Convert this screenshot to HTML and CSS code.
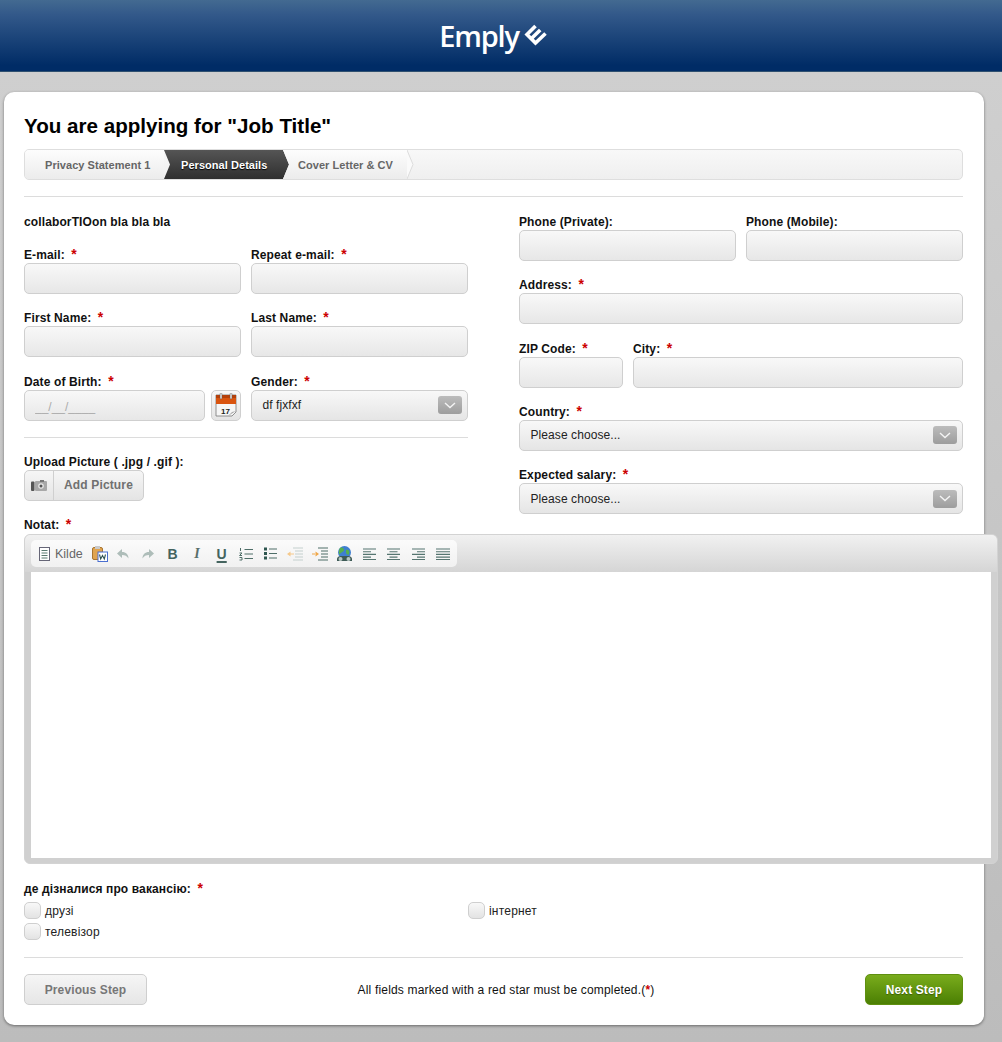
FILE: index.html
```html
<!DOCTYPE html>
<html lang="en">
<head>
<meta charset="utf-8">
<title>Emply</title>
<link rel="stylesheet" href="styles.css">
</head>
<body>
<header class="top">
  <span class="logo-text">Emply</span>
  <svg class="logo-mark" width="24" height="23" viewBox="0 0 24 23"><path d="M11.5 3 L3 11.5 L11.5 20 L21.5 10.5 M7.2 15.8 L16.2 7" fill="none" stroke="#fff" stroke-width="3.6" stroke-linejoin="miter"/></svg>
</header>
<main class="card">
  <h1 class="title">You are applying for "Job Title"</h1>
  <nav class="steps">
    <div class="step step-first">Privacy Statement 1</div>
    <div class="step step-active">Personal Details</div>
    <div class="step step-last">Cover Letter &amp; CV</div>
    <svg class="step-tip" width="7" height="29" viewBox="0 0 7 29"><path d="M0 0 L6 14.5 L0 29" fill="#fafafa" stroke="#dcdcdc"/></svg>
  </nav>
  <hr class="rule rule-top">
  <div class="columns">
    <section class="col">
      <div class="label intro">collaborTIOon bla bla bla</div>
      <div class="row">
        <div class="field grow"><label class="label">E-mail: <b class="star">*</b></label><input class="input" type="text"></div>
        <div class="field grow"><label class="label">Repeat e-mail: <b class="star">*</b></label><input class="input" type="text"></div>
      </div>
      <div class="row">
        <div class="field grow"><label class="label">First Name: <b class="star">*</b></label><input class="input" type="text"></div>
        <div class="field grow"><label class="label">Last Name: <b class="star">*</b></label><input class="input" type="text"></div>
      </div>
      <div class="row">
        <div class="field grow">
          <label class="label">Date of Birth: <b class="star">*</b></label>
          <div class="date-row">
            <input class="input date" type="text" placeholder="__/__/____">
            <button class="cal" type="button">
              <svg width="24" height="24" viewBox="0 0 24 24"><path d="M2 2 H22 V19 L18 23 H2 Z" fill="#f6f6f6" stroke="#777" stroke-width=".8"/><rect x="2" y="2" width="20" height="9" fill="#d9540f"/><rect x="2" y="2" width="20" height="3" fill="#b5400a"/><rect x="6" y="0" width="2" height="6" rx="1" fill="#ddd" stroke="#555" stroke-width=".4"/><rect x="16" y="0" width="2" height="6" rx="1" fill="#ddd" stroke="#555" stroke-width=".4"/><path d="M14 23 L22 18 L18 19 Z" fill="#aaa"/><text x="11.5" y="20.5" class="cal-day">17</text></svg>
            </button>
          </div>
        </div>
        <div class="field grow"><label class="label">Gender: <b class="star">*</b></label>
          <div class="select"><span>df fjxfxf</span><span class="arrow"><svg width="12" height="7" viewBox="0 0 12 7"><path d="M1 1 L6 5.5 L11 1" fill="none" stroke="#f4f4f4" stroke-width="1.4"/></svg></span></div>
        </div>
      </div>
      <hr class="rule rule-upload">
      <label class="label">Upload Picture ( .jpg / .gif ):</label>
      <button class="add-picture" type="button">
        <span class="add-icon"><svg width="16" height="11" viewBox="0 0 16 11"><rect x="0" y="1.5" width="3.5" height="9.5" rx="1" fill="#555"/><rect x="4" y="1" width="12" height="10" rx="1" fill="#a8a8a8"/><rect x="9" y="0" width="4" height="2" fill="#777"/><circle cx="10" cy="6" r="2.8" fill="#e8e8e8"/><circle cx="10" cy="6" r="1.5" fill="#555"/></svg></span>
        <span class="add-text">Add Picture</span>
      </button>
      <label class="label notat">Notat: <b class="star">*</b></label>
    </section>
    <section class="col">
      <div class="row">
        <div class="field grow"><label class="label">Phone (Private):</label><input class="input" type="text"></div>
        <div class="field grow"><label class="label">Phone (Mobile):</label><input class="input" type="text"></div>
      </div>
      <div class="field"><label class="label">Address: <b class="star">*</b></label><input class="input" type="text"></div>
      <div class="row">
        <div class="field zip"><label class="label">ZIP Code: <b class="star">*</b></label><input class="input" type="text"></div>
        <div class="field grow"><label class="label">City: <b class="star">*</b></label><input class="input" type="text"></div>
      </div>
      <div class="field"><label class="label">Country: <b class="star">*</b></label>
        <div class="select"><span>Please choose...</span><span class="arrow"><svg width="12" height="7" viewBox="0 0 12 7"><path d="M1 1 L6 5.5 L11 1" fill="none" stroke="#f4f4f4" stroke-width="1.4"/></svg></span></div>
      </div>
      <div class="field"><label class="label">Expected salary: <b class="star">*</b></label>
        <div class="select"><span>Please choose...</span><span class="arrow"><svg width="12" height="7" viewBox="0 0 12 7"><path d="M1 1 L6 5.5 L11 1" fill="none" stroke="#f4f4f4" stroke-width="1.4"/></svg></span></div>
      </div>
    </section>
  </div>
  <section class="editor">
    <div class="toolbar-wrap">
      <div class="toolbar">
        <span class="tool tool-doc"><svg width="12" height="14" viewBox="0 0 12 14"><rect x=".5" y=".5" width="10" height="13" fill="#fff" stroke="#667"/><path d="M2.5 3.5H8.5M2.5 6H8.5M2.5 8.5H8.5M2.5 11H8.5" stroke="#5a7a70"/></svg></span>
        <span class="kilde">Kilde</span>
        <span class="tool tool-paste"><svg width="16" height="16" viewBox="0 0 16 16"><rect x="0.5" y="1.5" width="10" height="12" rx="1.5" fill="#e0a450" stroke="#a9752f"/><rect x="3" y="0" width="5" height="3" fill="#c9c9c9"/><rect x="6" y="6" width="9.5" height="9.5" fill="#fff" stroke="#4a6fd0"/><path d="M7.5 8.5L8.7 13L10.5 9.5L12.3 13L13.5 8.5" fill="none" stroke="#355" stroke-width="1.1"/></svg></span>
        <span class="tool"><svg width="14" height="12" viewBox="0 0 14 12"><path d="M6 1L1 5.5L6 10V7C9 7 11 8 12.5 10.5C12.5 6.5 10 4 6 4Z" fill="#aebdb9"/></svg></span>
        <span class="tool"><svg width="14" height="12" viewBox="0 0 14 12"><path d="M8 1L13 5.5L8 10V7C5 7 3 8 1.5 10.5C1.5 6.5 4 4 8 4Z" fill="#aebdb9"/></svg></span>
        <span class="tool glyph">B</span>
        <span class="tool glyph glyph-i">I</span>
        <span class="tool glyph glyph-u">U</span>
        <span class="tool"><svg width="15" height="14" viewBox="0 0 15 14"><path d="M5.5 2.5H14M5.5 7H14M5.5 11.5H14" stroke="#4e6e68" stroke-width="1.2"/><path d="M1.5 1V4M.5 6H3L.5 8.5H3M.5 10.5H3V13H.5" fill="none" stroke="#4e6e68"/></svg></span>
        <span class="tool"><svg width="13" height="13" viewBox="0 0 13 13"><path d="M5 2H13M5 6.5H13M5 11H13" stroke="#4e6e68" stroke-width="1.2"/><rect x="0" y=".5" width="3" height="3" fill="#2f5750"/><rect x="0" y="5" width="3" height="3" fill="#2f5750"/><rect x="0" y="9.5" width="3" height="3" fill="#2f5750"/></svg></span>
        <span class="tool"><svg width="16" height="14" viewBox="0 0 16 14"><path d="M6 1H16M8 4H16M8 7H16M8 10H16M6 13H16" stroke="#c4d0cd" stroke-width="1.2"/><path d="M0 7L3.5 4.5V9.5Z M3 6.5H7V7.5H3Z" fill="#f5c98c"/></svg></span>
        <span class="tool"><svg width="16" height="14" viewBox="0 0 16 14"><path d="M6 1H16M9 4H16M9 7H16M9 10H16M6 13H16" stroke="#4e6e68" stroke-width="1.2"/><path d="M7 7L3.5 4.5V9.5Z M0 6.5H4V7.5H0Z" fill="#f0a84a"/></svg></span>
        <span class="tool"><svg width="17" height="16" viewBox="0 0 17 16"><circle cx="8.5" cy="6.5" r="6.5" fill="#3f7fd0"/><path d="M4 2C6 1 8 2 8 4S5 6 4 8 2 5 4 2ZM10 4C13 3 14 6 13 8S10 8 10 6Z" fill="#55b04f"/><path d="M1 13C1 11 3 10 5 10H12C14 10 16 11 16 13V15H1Z" fill="#3d5a55"/><circle cx="4.5" cy="13" r="2" fill="#b9c8c4"/><circle cx="12.5" cy="13" r="2" fill="#b9c8c4"/></svg></span>
        <span class="tool"><svg width="13" height="12" viewBox="0 0 13 12"><path d="M0 1H13M0 3.7H8M0 6.4H13M0 9.1H8M0 11.6H13" stroke="#557570" stroke-width="1.1"/></svg></span>
        <span class="tool"><svg width="13" height="12" viewBox="0 0 13 12"><path d="M0 1H13M2.5 3.7H10.5M0 6.4H13M2.5 9.1H10.5M0 11.6H13" stroke="#557570" stroke-width="1.1"/></svg></span>
        <span class="tool"><svg width="13" height="12" viewBox="0 0 13 12"><path d="M0 1H13M5 3.7H13M0 6.4H13M5 9.1H13M0 11.6H13" stroke="#557570" stroke-width="1.1"/></svg></span>
        <span class="tool"><svg width="14" height="12" viewBox="0 0 14 12"><path d="M0 1H14M0 3.7H14M0 6.4H14M0 9.1H14M0 11.6H14" stroke="#557570" stroke-width="1.1"/></svg></span>
      </div>
    </div>
    <div class="editor-area"></div>
  </section>
  <label class="label question">де дізналися про вакансію: <b class="star">*</b></label>
  <div class="options">
    <label class="option"><span class="check"></span>друзі</label>
    <label class="option"><span class="check"></span>інтернет</label>
    <label class="option"><span class="check"></span>телевізор</label>
  </div>
  <hr class="rule rule-bottom">
  <footer class="actions">
    <button class="btn btn-prev" type="button">Previous Step</button>
    <p class="note">All fields marked with a red star must be completed.(<b class="star star-note">*</b>)</p>
    <button class="btn btn-next" type="button">Next Step</button>
  </footer>
</main>
</body>
</html>
```
FILE: styles.css
```css
* { box-sizing: border-box; }
html { background: #bfbfbf; }
body {
  margin: 0;
  height: 1042px;
  overflow: hidden;
  font-family: "Liberation Sans", Arial, sans-serif;
  font-size: 12px;
  color: #111;
  background: linear-gradient(#cfcfcf 72px, #bcbcbc 1042px);
}
.top {
  height: 72px;
  display: flex;
  align-items: center;
  justify-content: center;
  gap: 5px;
  padding-right: 15px;
  background: linear-gradient(#436a91, #33598a 20%, #002c66 92%);
  border-bottom: 1px solid #2f5070;
}
.logo-text {
  font-family: "Open Sans", "Noto Sans", sans-serif;
  font-size: 29px;
  font-weight: 600;
  line-height: 32px;
  color: #fff;
  letter-spacing: -1.2px;
}
.logo-mark { margin-top: -2px; }
.card {
  width: 980px;
  height: 933px;
  margin: 20px 0 0 4px;
  padding: 22px 21px 20px 20px;
  background: #fff;
  border-radius: 10px;
  box-shadow: 0 1px 3px rgba(0,0,0,.45);
}
.title {
  margin: 0 0 11px;
  font-size: 20.6px;
  line-height: 24px;
  font-weight: bold;
  color: #000;
}
.steps {
  height: 31px;
  display: flex;
  align-items: stretch;
  border: 1px solid #dedede;
  border-radius: 5px;
  background: linear-gradient(#f8f8f8, #efefef);
  overflow: hidden;
}
.step {
  font-size: 11px;
  font-weight: bold;
  line-height: 30px;
  color: #666;
  letter-spacing: .05px;
}
.step-first {
  width: 139px;
  padding-left: 20px;
  background: linear-gradient(#fdfdfd, #ececec);
}
.step-active {
  width: 125px;
  padding-left: 17px;
  color: #fff;
  text-shadow: 0 1px 1px #000;
  background: linear-gradient(#555, #2f2f2f);
  clip-path: polygon(0 0, calc(100% - 6px) 0, 100% 50%, calc(100% - 6px) 100%, 0 100%, 6px 50%);
}
.step-last {
  width: 124px;
  margin-left: -6px;
  padding-left: 15px;
  background: linear-gradient(#fdfdfd, #ececec);
  clip-path: polygon(0 0, 100% 0, 100% 100%, 0 100%, 6px 50%);
}
.step-tip { flex: none; }
.rule {
  border: 0;
  height: 1px;
  margin: 0;
  background: #dcdcdc;
}
.rule-top { margin: 16px 0 17px; }
.rule-upload { margin: 0 0 16.4px; }
.rule-bottom { margin: 17px 0 16px; }
.columns {
  display: grid;
  grid-template-columns: 444px 444px;
  column-gap: 51px;
}
.col { min-width: 0; }
.label {
  display: block;
  height: 16px;
  font-size: 12px;
  line-height: 16px;
  font-weight: bold;
  color: #111;
  letter-spacing: .12px;
}
.intro { margin-bottom: 17px; }
.star {
  margin-left: 3px;
  color: #cc0000;
  font-size: 14px;
  line-height: 12px;
}
.row { display: flex; gap: 10px; }
.field { margin-bottom: 16.25px; min-width: 0; }
.grow { flex: 1 1 0; }
.zip { flex: 0 0 104px; }
.input {
  display: block;
  width: 100%;
  height: 31px;
  padding: 0 10px;
  border: 1px solid #cfcfcf;
  border-radius: 5px;
  background: linear-gradient(#f8f8f8, #e7e7e7);
  font: 12px "Liberation Sans", Arial, sans-serif;
}
.date-row { display: flex; gap: 6px; }
.date { flex: 1 1 0; min-width: 0; padding-top: 3px; }
.date::placeholder { color: #aaa; opacity: 1; }
.cal {
  flex: 0 0 30px;
  height: 31px;
  padding: 0;
  display: flex;
  align-items: center;
  justify-content: center;
  border: 1px solid #cfcfcf;
  border-radius: 5px;
  background: linear-gradient(#f8f8f8, #e4e4e4);
}
.cal-day {
  font: bold 8px "Liberation Sans", Arial, sans-serif;
  fill: #222;
  text-anchor: middle;
}
.select {
  height: 31px;
  display: flex;
  align-items: center;
  justify-content: space-between;
  padding: 0 5px 0 10.5px;
  border: 1px solid #cfcfcf;
  border-radius: 5px;
  background: linear-gradient(#f8f8f8, #e5e5e5);
  font-size: 12px;
  color: #222;
  letter-spacing: .08px;
}
.arrow {
  width: 24px;
  height: 18px;
  display: flex;
  align-items: center;
  justify-content: center;
  border-radius: 3px;
  background: linear-gradient(#bcbcbc, #9d9d9d);
}
.add-picture {
  display: flex;
  width: 120px;
  height: 31px;
  padding: 0;
  margin-bottom: 16px;
  border: 1px solid #cfcfcf;
  border-radius: 5px;
  background: linear-gradient(#f6f6f6, #e4e4e4);
  font-family: inherit;
}
.add-icon {
  flex: 0 0 29px;
  display: flex;
  align-items: center;
  justify-content: center;
  border-right: 1px solid #cfcfcf;
  height: 100%;
}
.add-text {
  flex: 1;
  font-size: 12px;
  font-weight: bold;
  line-height: 29px;
  color: #707070;
  text-align: center;
  letter-spacing: .15px;
}
.notat { margin-bottom: 1px; }
.editor {
  width: 974px;
  height: 330px;
  display: flex;
  flex-direction: column;
  padding: 0 6px 5px;
  border: 1px solid #d3d3d3;
  border-radius: 6px;
  background: #d0d0d0;
}
.toolbar-wrap {
  margin: 0 -6px;
  height: 37px;
  padding: 5px 0 0 6px;
  border-radius: 5px 5px 0 0;
  background: linear-gradient(#f1f1f1, #d5d5d5);
}
.toolbar {
  width: 426px;
  height: 27px;
  display: flex;
  align-items: center;
  padding-left: 5px;
  border-radius: 5px;
  background: linear-gradient(#fbfbfb, #f1f1f1);
}
.tool {
  flex: 0 0 24.6px;
  display: flex;
  align-items: center;
  justify-content: center;
}
.tool-doc { flex-basis: 17px; }
.tool-paste { flex-basis: 21px; margin-right: 1px; }
.kilde {
  flex: 0 0 36px;
  padding-left: 2px;
  font-size: 12.5px;
  color: #666;
}
.glyph {
  font-size: 14px;
  font-weight: bold;
  color: #44645f;
}
.glyph-i { font-style: italic; color: #5a6f6b; font-family: "Liberation Serif", serif; }
.glyph-u { text-decoration: underline; text-underline-offset: 2px; text-decoration-thickness: 2px; }
.editor-area { flex: 1; background: #fff; }
.question { margin: 16.4px 0 5.6px; }
.options {
  display: grid;
  grid-template-columns: 444px 1fr;
  row-gap: 4px;
}
.option {
  display: flex;
  align-items: center;
  gap: 4px;
  height: 17px;
  font-size: 12px;
  color: #222;
  letter-spacing: .2px;
}
.check {
  flex: 0 0 17px;
  height: 17px;
  border: 1px solid #cfcfcf;
  border-radius: 5px;
  background: linear-gradient(#f8f8f8, #e3e3e3);
}
.actions {
  display: flex;
  align-items: center;
  justify-content: space-between;
}
.btn {
  height: 31px;
  border-radius: 5px;
  font: bold 12px "Liberation Sans", Arial, sans-serif;
  letter-spacing: .12px;
}
.btn-prev {
  width: 123px;
  border: 1px solid #cfcfcf;
  background: linear-gradient(#f5f5f5, #e6e6e6);
  color: #777;
}
.btn-next {
  width: 98px;
  border: 1px solid #5f8f10;
  background: linear-gradient(#79ac1c, #4b7f03);
  color: #fff;
  text-shadow: 0 1px 1px #3a5e00;
}
.note {
  margin: 0;
  font-size: 12px;
  color: #111;
  letter-spacing: .17px;
}
.star-note { margin: 0; font-size: 12px; }
```
